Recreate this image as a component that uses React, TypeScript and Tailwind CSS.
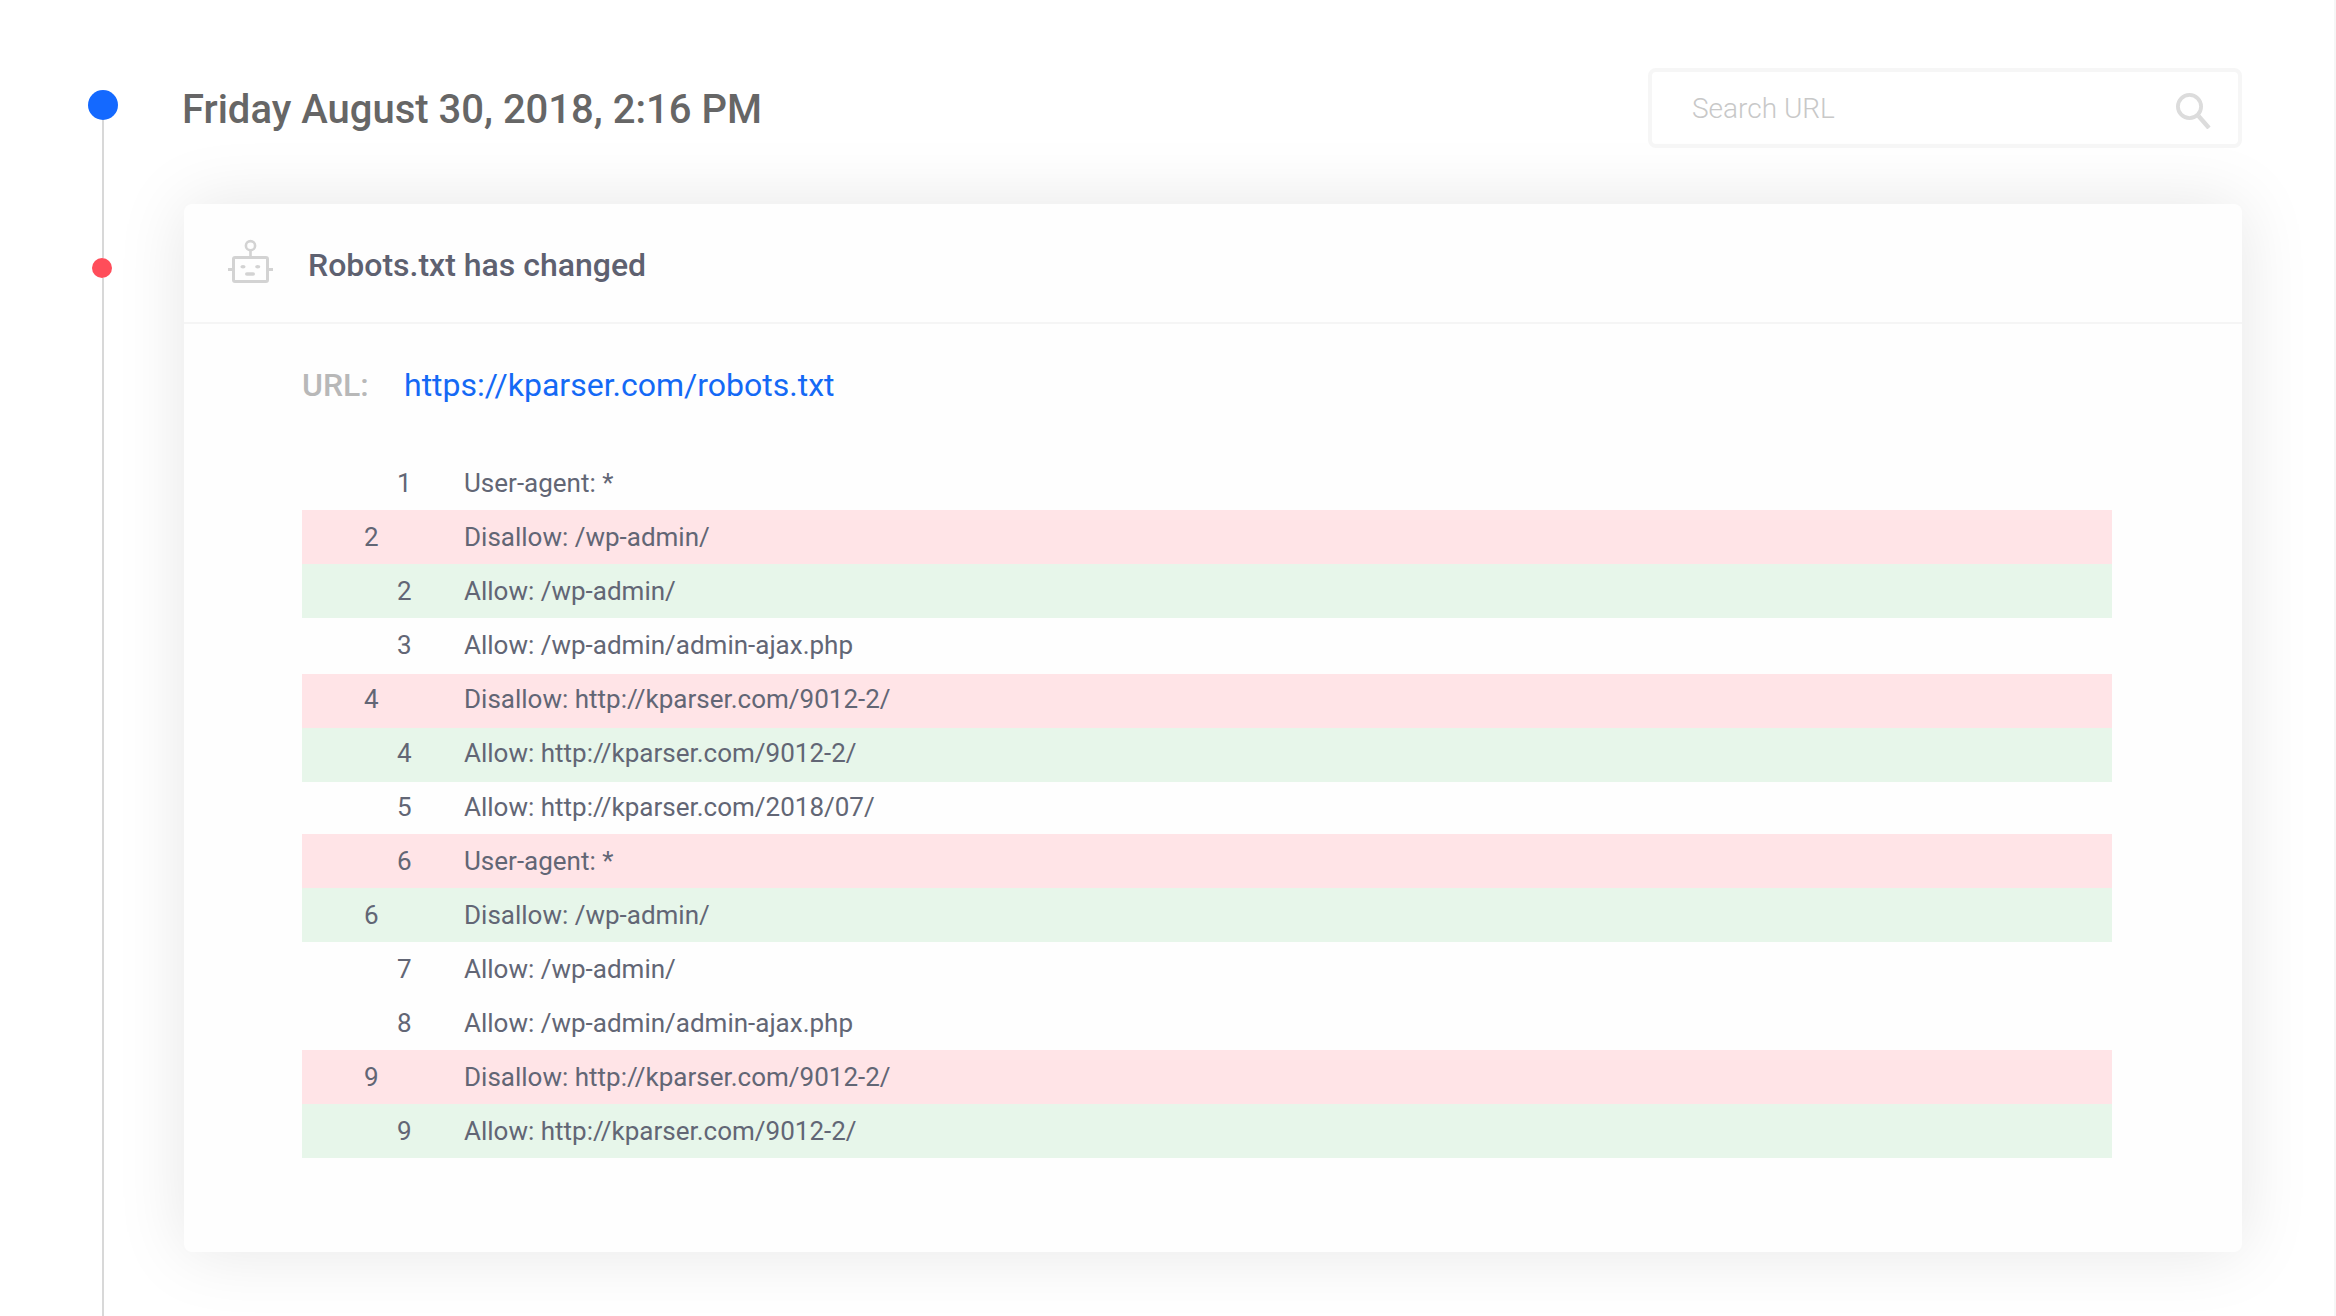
import React from 'react';

type Row = { num: number; text: string; tone: 'plain' | 'removed' | 'added'; left?: boolean; box?: string };

const rows: Row[] = [
    { num: 1, text: 'User-agent: *', tone: 'plain' },
    { num: 2, text: 'Disallow: /wp-admin/', tone: 'removed', left: true },
    { num: 2, text: 'Allow: /wp-admin/', tone: 'added' },
    { num: 3, text: 'Allow: /wp-admin/admin-ajax.php', tone: 'plain', box: 'h-[56px] pb-[2px]' },
    { num: 4, text: 'Disallow: http://kparser.com/9012-2/', tone: 'removed', left: true, box: 'h-[54px] pb-[4px]' },
    { num: 4, text: 'Allow: http://kparser.com/9012-2/', tone: 'added', box: 'h-[54px] pb-[4px]' },
    { num: 5, text: 'Allow: http://kparser.com/2018/07/', tone: 'plain', box: 'h-[52px] pb-[2px]' },
    { num: 6, text: 'User-agent: *', tone: 'removed' },
    { num: 6, text: 'Disallow: /wp-admin/', tone: 'added', left: true },
    { num: 7, text: 'Allow: /wp-admin/', tone: 'plain' },
    { num: 8, text: 'Allow: /wp-admin/admin-ajax.php', tone: 'plain' },
    { num: 9, text: 'Disallow: http://kparser.com/9012-2/', tone: 'removed', left: true },
    { num: 9, text: 'Allow: http://kparser.com/9012-2/', tone: 'added' },
];

const toneClass = {
    plain: '',
    removed: 'bg-[#ffe4e7]',
    added: 'bg-[#e7f6ea]',
};

const RobotIcon = () => (
    <svg width="45" height="44" viewBox="0 0 45 44" fill="none" stroke="#d3d3d3" className="mb-[4px] shrink-0">
        <circle cx="22.5" cy="6.7" r="4.6" strokeWidth="2.6" />
        <path d="M22.5 11.5V17" strokeWidth="2.6" />
        <rect x="5.5" y="18.5" width="34" height="24" rx="1.5" strokeWidth="3" />
        <path d="M0.5 30.5H4M41 30.5H44.5" strokeWidth="3" strokeLinecap="round" />
        <ellipse cx="15" cy="27.7" rx="2.6" ry="1.7" fill="#d3d3d3" stroke="none" />
        <ellipse cx="29.7" cy="27.7" rx="2.6" ry="1.7" fill="#d3d3d3" stroke="none" />
        <rect x="17" y="33.2" width="10" height="3.6" rx="1.8" fill="#d3d3d3" stroke="none" />
    </svg>
);

const SearchIcon = () => (
    <svg width="36" height="36" viewBox="0 0 36 36" fill="none" stroke="#dcdcdc" className="shrink-0">
        <circle cx="13.5" cy="13.5" r="11.6" strokeWidth="3.8" />
        <path d="M22.5 23L33 35" strokeWidth="4.4" />
    </svg>
);

export default function App() {
    return (
        <div className="flex h-[1316px] overflow-hidden border-r-2 border-[#f6f6f6] bg-white font-['Roboto',sans-serif]">
            <div className="ml-[88px] flex w-[30px] shrink-0 flex-col items-center pt-[90px]">
                <div className="h-[30px] w-[30px] shrink-0 rounded-full bg-[#1469ff]" />
                <div className="h-[138px] w-[2px] bg-[#d8d8d8]" />
                <div className="mr-[2px] h-[20px] w-[20px] shrink-0 rounded-full bg-[#ff4d5a]" />
                <div className="w-[2px] flex-1 bg-[#d8d8d8]" />
            </div>

            <div className="ml-[66px] w-[2058px] shrink-0 pt-[68px]">
                <div className="flex h-[80px] items-center justify-between">
                    <h1 className="mt-[3px] -ml-[2px] text-[40px] leading-none font-medium text-[#666666]">Friday August 30, 2018, 2:16 PM</h1>
                    <div className="flex h-[80px] w-[594px] items-center justify-between rounded-lg border-4 border-[#f6f6f6] pr-[26px] pl-[40px]">
                        <span className="mt-[2px] text-[28px] font-light text-[#c8c8c8]">Search URL</span>
                        <span className="mt-[6px] flex"><SearchIcon /></span>
                    </div>
                </div>

                <div className="mt-[56px] h-[1048px] rounded-lg bg-[#fefefe] shadow-[0_0_70px_rgba(0,0,0,0.1)]">
                    <div className="flex h-[120px] items-center border-b-2 border-[#f5f5f5] pl-[44px]">
                        <RobotIcon />
                        <h2 className="mt-[3px] ml-[35px] text-[32px] font-medium text-[#5e6170]">Robots.txt has changed</h2>
                    </div>

                    <div className="pt-[37px] pr-[130px] pl-[118px]">
                        <div className="flex h-[48px] items-center text-[32px]">
                            <span className="w-[102px] font-medium text-[#b8b8b8]">URL:</span>
                            <a className="text-[#1469f5]">https://kparser.com/robots.txt</a>
                        </div>

                        <div className="mt-[47px]">
                            {rows.map((row, i) => (
                                <div key={i} className={`flex items-center text-[26px] text-[#626675] ${row.box ?? 'h-[54px]'} ${toneClass[row.tone]}`}>
                                    <span className="w-[95px] pl-[62px]">{row.left ? row.num : ''}</span>
                                    <span className="w-[67px]">{row.left ? '' : row.num}</span>
                                    <span>{row.text}</span>
                                </div>
                            ))}
                        </div>
                    </div>
                </div>
            </div>
        </div>
    );
}
